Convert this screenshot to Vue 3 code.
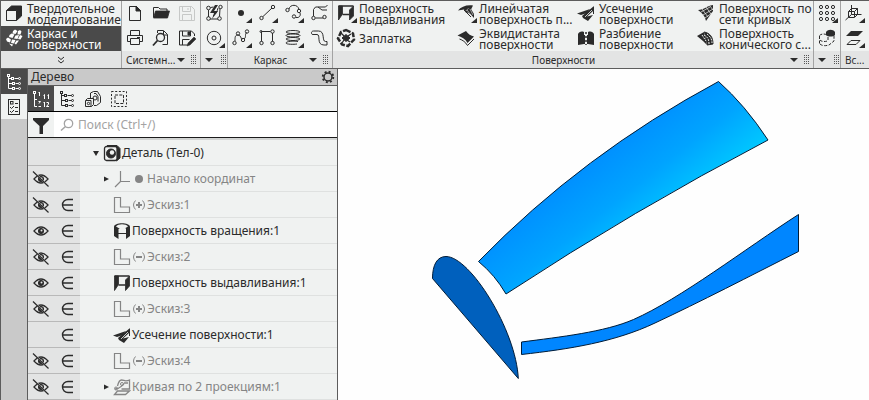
<script setup>
import { ref } from 'vue'

const corner = '<path d="M24 17v5h-6z" fill="currentColor" stroke="none"/>'

// Ribbon glyphs, drawn in a 26x25 cell
const glyphs = {
  solid: '<path d="M5.500 9.500l5-4.500h10v10l-5 4.500h-10z" fill="currentColor"/><path d="M5.500 9.500h10v10h-10z" fill="#f0f2f1"/>',
  frame: '<g fill="currentColor" stroke="none"><path d="M12 5l2-1.500 2.500 1.500-2 3-3-.5zM17 5l2-1 1.500 1.500-1 3-3 0zM8.500 9l2-1.500 3 1-2 3.500-3.500-1zM14.500 9.500l3.500-.5-1.500 4-3.500-.5zM19 9l2.500 1-2 3.500-2.500-.5zM5 13l2-1.500 3 2-1 3-3-1zM11 13.500l3.500 .5-1.500 3.500-3-.5zM15.500 14.500l2.500 0-3 4-1.500-1zM8 17.500l4 1-1 2z"/></g>',
  file: '<path d="M7.500 5.500h7l4 4v10h-11z"/><path d="M14 5v5h5z" fill="currentColor"/>',
  open: '<path d="M5.500 16V6.500h5l1.500 1.500h7v2"/><path d="M5.500 17l2-7h14l-2 7z" fill="currentColor" stroke-width=".8"/>',
  save: '<path d="M5.500 5.500h12l3 3v11h-15z"/><path d="M8.500 5.500v5h8v-5M8.500 19v-5.500h9V19M14 7v2" />',
  print: '<path d="M8.500 9V4.500h9V9M8.500 15.500h-3v-6h15v6h-3M8.500 12.500h9v6h-9zM15 11.500h3"/>',
  preview: '<path d="M9.500 7V4.500h6l4 4v10h-5"/><path d="M15.500 5v4h4"/><circle cx="12.500" cy="11.500" r="4" stroke-width="1.300"/><path d="M9.500 14.500l-4.500 5" stroke-width="1.800"/>',
  saveas: '<path d="M20.500 10V8l-3-3h-12v14h8"/><path d="M8.500 5v5h8V5M8.500 19v-5.500h7"/><path d="M20 11l2 2-6 6-3 1 1-3z" fill="currentColor" stroke-width=".5"/><path d="M14 6h2v3h-2z" fill="currentColor"/>',
  autosketch: '<path d="M7.500 16V9M9 18h8M18.500 15.500l.5-8M9.500 6.500l3-.5M12 15c3-2 4-4 5-8"/><circle cx="7.500" cy="7" r="1.800"/><circle cx="7.500" cy="17.500" r="1.800"/><circle cx="18.500" cy="17.500" r="1.800"/><circle cx="19.500" cy="6" r="1.700"/><path d="M14 4l-5 8h4l-2 6 6-8h-4l4-6z" fill="currentColor" stroke="none"/>',
  circle: '<circle cx="13" cy="12" r="6.700"/><circle cx="13" cy="12" r="2"/>' + corner,
  point: '<circle cx="13" cy="12" r="3" fill="currentColor" stroke="none"/>' + corner,
  line: '<path d="M9 15.500L18 7"/><circle cx="7.500" cy="17" r="1.700"/><circle cx="19" cy="6" r="1.700"/>' + corner,
  arc: '<path d="M9 8c1-5 9-5 10 .5M20 12c1 3-1 5-4 4.500"/><circle cx="7.500" cy="9" r="1.700"/><circle cx="19" cy="10" r="1.700"/><circle cx="14" cy="15.500" r="1.700"/>' + corner,
  contour: '<path d="M7.500 15V8.500l2-2.500h10l2-2M9.500 17H17M12 6l4 3h5"/><circle cx="7.500" cy="17" r="1.700"/><circle cx="18.500" cy="16" r="1.700"/>',
  spline: '<path d="M7 15c0-4 0-6 3-6s3 4 4 4.500M16 13c3-2 0-5 3-6.500"/><circle cx="6.500" cy="17" r="1.700"/><circle cx="10" cy="7.500" r="1.700"/><circle cx="15" cy="14" r="1.700"/><circle cx="19" cy="5.500" r="1.700"/>' + corner,
  poly: '<path d="M7.500 15.500V5.500h9M18.500 7v8.500"/><circle cx="7.500" cy="17" r="1.700"/><circle cx="18.500" cy="17" r="1.700"/><circle cx="18.500" cy="5.500" r="1.700"/><circle cx="7" cy="5.500" r="1"/>',
  helix: '<g><ellipse cx="13" cy="6" rx="7" ry="1.500"/><ellipse cx="13" cy="9.500" rx="7" ry="1.500"/><ellipse cx="13" cy="13" rx="7" ry="1.500"/><path d="M18 15.500c-5-1-12 0-12 1.500s8 1.500 11 1"/></g>' + corner,
  equid: '<path d="M5.500 7.500a2 2 0 0 1 2-2.500h5c7 0 3 10.500 7 10.500h1.500v3.500h-3c-8 0-3-10.500-7-10.500H7a1.500 1.500 0 0 1-1.500-1"/>',
  extrude: '<path d="M5.500 5h4v8l-4 6zM20.500 5v10l-4 4V9z" fill="currentColor" stroke-width=".8"/><path d="M5.500 5h15M9.500 13.500h7" stroke-width="1.300"/>' + corner,
  patch: '<path d="M13 4l7 3.500 1 6-6 6.500-6-1.500-4-6 3-6.500z" stroke-dasharray="5 1.500" stroke-width="2.500"/><path d="M13 8.500l4 3.500-4 3.500-4-3.500z" fill="currentColor"/><path d="M8 7l3 3M18 8l-3 2M9 17l2-3M17 16l-3-2" stroke-width="1.300"/>',
  ruled: '<path d="M5 9.500c3-4 9-6 15-5l-2 4-3-1-3 3-1-2z" fill="currentColor" stroke="none"/><path d="M12 11l3-3h3l3 5v4c-3-4-5-5-9-6z" fill="currentColor" stroke="none"/><path d="M14 9l4 5M17 8l3 6" stroke="#f0f2f1" stroke-width=".6"/><path d="M11 9l7 7"/>' + corner,
  offset: '<path d="M4.500 9.500L13 5c2 3 5 5 8 5.500l-6.500 6.500c-2-4-6-6-10-7.500z" fill="currentColor" stroke="none"/><path d="M6.500 13c3 1 6 3 8 6.500l6.500-6.500"/>',
  trim: '<path d="M4 12.500l13-4.500-3 4-6 2z" fill="currentColor" stroke="none"/><path d="M9 15L21 5l-1 5-6 5.500 6-1.500-5 6-5-3z" fill="currentColor" stroke="none"/><path d="M12 16l7-7" stroke="#f0f2f1" stroke-width=".8"/><path d="M20.500 6v7"/>',
  split: '<path d="M5 19V8c1-2 3-3 6-2v3h4V6c3-1 5 0 6 2v11l-6-1h-4z" fill="currentColor" stroke="none"/><path d="M13 4v16" stroke="#f0f2f1" stroke-width="2"/><path d="M13 6v2M13 10v2M13 14v2M13 18v1" stroke-width="1.500"/>',
  mesh: '<path d="M5 9c6 0 8-4 15-5l0 6-7 10c-1-5-4-8-8-11z" fill="currentColor" stroke="none"/><path d="M8 11l9-5M10 14l10-6M12 17l7-5M9 8l6 8M13 6l5 7M17 5l3 4" stroke="#f0f2f1" stroke-width=".7"/>',
  conic: '<path d="M4 10l7-4 3 13-4-4z" fill="currentColor" stroke="none"/><path d="M11 6c6 1 9 5 9 12l-6 1" fill="currentColor"/><path d="M11 9c4 2 5 5 5 9M14 8c4 3 5 6 5 9M9 9l4 6" stroke="#f0f2f1" stroke-dasharray="2 1"/>',
  array: '<g>' + [6, 12, 18].map(y => [7, 13, 19].map(x => `<circle cx="${x}" cy="${y}" r="1.600"/>`).join('')).join('') + '</g>' + corner,
  body: '<path d="M12 6c2-3 7-3 9 0v3c-2 2-7 2-9 0z" fill="currentColor" stroke="none"/><path d="M5.500 9.500c2-2 6-2 8 0M5.500 10v8M6 18c2 2 6 2 9 1l5-4V9M14 11v3c0 2-7 2-8 0" stroke-dasharray="3 1.500"/>',
  axes: '<path d="M10.500 4v9.500h10M10.500 13.500L4.500 19M7.500 10.500l3-3h6v6l-3 3h-6zM13.500 16v-5.500l3-3M7.500 10.500h6"/>' + corner,
  planes: '<path d="M10 5h12l-5 5H5z" fill="currentColor" stroke="none"/><path d="M10 14.500h9l-4 4H6z"/>' + corner,
}

// Tree and panel glyphs, drawn in an 18x18 cell
const small = {
  tree: '<rect x="2.500" y="1.500" width="2" height="2"/><path d="M3.500 4v11.500h4M3.500 10.500h4M3.500 5.500h3M9.500 5.500h4M10.500 10.500h3M10.500 15.500h3"/><rect x="6.500" y="4.500" width="2" height="2"/><rect x="7.500" y="9.500" width="2" height="2"/><rect x="7.500" y="14.500" width="2" height="2"/><circle cx="14.500" cy="5.500" r="1"/><circle cx="14.500" cy="10.500" r="1"/><circle cx="14.500" cy="15.500" r="1"/>',
  checks: '<rect x="3.500" y="1.500" width="11" height="15"/><rect x="5.500" y="3.500" width="2.500" height="2.500"/><path d="M10 5.500h3M10 9.500h3M10 13.500h3M5 9l1.500 1.500L9 8M5 13l1.500 1.500L9 12"/>',
  numtree: '<rect x="1.500" y="1.500" width="2" height="2"/><path d="M2.500 4v12.500H5M2.500 9.500H5M7.500 2v4M6.500 3l1-1M6.500 16.500h2.500M6.500 11.500h2l-1.500 2M11.500 5.500l1-1V9M15.500 5.500l1-1V9M11.500 13l1-1V17M14.500 12.500h2v1.500l-2 2.500H17"/>',
  parts: '<path d="M6.500 8V3l3-1.500h4l3 5v6l-4 3h-2.500M10 3.500h2l2 3v5M1.500 10.500l2-2h6v6l-2 2h-6zM2 10.500h5v6"/><circle cx="4.500" cy="13.500" r="1.200"/><circle cx="11" cy="8" r="2"/>',
  select: '<rect x="1.500" y="1.500" width="15" height="15" stroke-dasharray="2 1.700"/><rect x="5" y="5" width="8.500" height="8.500" stroke-dasharray="3 1.300"/>',
  filter: '<path d="M1 2h16v2l-6 6v8H7.500v-8L1 4z" fill="currentColor" stroke="none"/>',
  search: '<circle cx="10.500" cy="7.500" r="4.200" stroke-width="1.300"/><path d="M7.500 10.500L3 14.500" stroke-width="1.500"/>',
  gear: '<circle cx="9" cy="9" r="4" stroke-width="1.500"/><circle cx="9" cy="9" r="5.300" stroke-width="1.800" stroke-dasharray="2 2.160"/>',
  eye: '<path d="M2 9q7-8 14 0q-7 8-14 0z" stroke-width="1.300"/><circle cx="9" cy="9" r="2.600" fill="currentColor"/><circle cx="9.500" cy="8.500" r="1" fill="#e3e4e4" stroke="none"/>',
  hidden: '<path d="M2 9q7-8 14 0q-7 8-14 0z" stroke-width="1.300"/><circle cx="9" cy="9" r="2.600" fill="currentColor"/><circle cx="9.500" cy="8.500" r="1" fill="#e3e4e4" stroke="none"/><path d="M2 2l15 15" stroke="#e3e4e4" stroke-width="1.500"/><path d="M1 1.500l15.500 15" stroke-width="1.200"/>',
  element: '<path d="M15 3.500H10a5.500 5.500 0 0 0 0 11h5M4.500 9H15" stroke-width="1.400"/>',
  part: '<path d="M4 1.500h10l3 3v9.500l-3.500 3" fill="currentColor"/><rect x="1.500" y="2.500" width="12.500" height="14" rx="2" fill="#f0f2f1" stroke-width="1.300"/><circle cx="8" cy="9.500" r="4.500" fill="currentColor"/><circle cx="9" cy="8.500" r="2.200" fill="#f0f2f1" stroke="none"/>',
  origin: '<path d="M7.500 1v10.500h9.500M7.500 11.500L2 17" stroke-width="1.200"/>',
  sketch: '<path d="M1.500 1.500h6v9.500h9v5.500h-15z" stroke-width="1.200"/>',
  revolve: '<path d="M1 5c0-5 16-5 16 0v9l-4 3V6.500l-3-1.500H8L5.500 7v10L1 14z" fill="currentColor" stroke="none"/><path d="M3 4.500c2-3 10-3 12 0l-2.500 1.500h-7z" fill="#f0f2f1" stroke="none"/><path d="M5 11.500h8"/>',
  extrude: '<path d="M1.500 2h4v8.500l-4 6zM16.500 2v10l-4 4.500V6z" fill="currentColor" stroke-width=".8"/><path d="M1.500 2h15M5.500 11h7" stroke-width="1.300"/>',
  trim: '<path d="M0 9.500l13-4.500-3 4-6 2z" fill="currentColor" stroke="none"/><path d="M5 12L17 2l-1 5-6 5.500 6-1.500-5 6-5-3z" fill="currentColor" stroke="none"/><path d="M8 13l7-7" stroke="#f0f2f1" stroke-width=".8"/><path d="M16.500 3v7"/>',
  curve: '<path d="M4.500 8c1-4 2-6 4-6 3 0 3 2 8 0v9h-8M1.500 16.500h11l4-3.500h-12zM2 11c5 0 5-2 9-5M11 5h4" stroke-width="1.300"/><circle cx="9" cy="6" r="1.500"/><circle cx="3" cy="10.500" r="1.500"/>',
}

const modes = [
  { icon: 'solid', label: 'Твердотельное моделирование', active: false },
  { icon: 'frame', label: 'Каркас и поверхности', active: true },
]

const groups = [
  { name: 'Системн...', cls: 'system', tools: ['file', 'open', 'save', 'print', 'preview', 'saveas'] },
  { name: '', cls: 'narrow', tools: ['autosketch', 'circle'] },
  { name: 'Каркас', cls: 'wire', tools: ['point', 'line', 'arc', 'contour', 'spline', 'poly', 'helix', 'equid'] },
]

const surfaces = [
  ['extrude', 'Поверхность', 'выдавливания'],
  ['ruled', 'Линейчатая', 'поверхность п...'],
  ['trim', 'Усечение', 'поверхности'],
  ['mesh', 'Поверхность по', 'сети кривых'],
  ['patch', 'Заплатка'],
  ['offset', 'Эквидистанта', 'поверхности'],
  ['split', 'Разбиение', 'поверхности'],
  ['conic', 'Поверхность', 'конического с...'],
]

const panelTools = ['numtree', 'tree', 'parts', 'select']
const query = ref('')

const nodes = [
  { label: 'Деталь (Тел-0)', icon: 'part', root: true, toggle: '▼' },
  { label: 'Начало координат', icon: 'origin', eye: 'hidden', toggle: '▶', mark: '●', dim: true },
  { label: 'Эскиз:1', icon: 'sketch', eye: 'hidden', el: true, mark: '(+)', dim: true },
  { label: 'Поверхность вращения:1', icon: 'revolve', eye: 'eye', el: true },
  { label: 'Эскиз:2', icon: 'sketch', eye: 'hidden', el: true, mark: '(−)', dim: true },
  { label: 'Поверхность выдавливания:1', icon: 'extrude', eye: 'eye', el: true },
  { label: 'Эскиз:3', icon: 'sketch', eye: 'hidden', el: true, mark: '(+)', dim: true },
  { label: 'Усечение поверхности:1', icon: 'trim', el: true },
  { label: 'Эскиз:4', icon: 'sketch', eye: 'hidden', el: true, mark: '(−)', dim: true },
  { label: 'Кривая по 2 проекциям:1', icon: 'curve', eye: 'hidden', el: true, toggle: '▶', dim: true },
]
</script>

<template>
  <div class="app">
    <header class="ribbon">
      <section class="group modes">
        <button v-for="m in modes" :key="m.icon" class="wide" :class="{ active: m.active }">
          <svg class="glyph" viewBox="0 0 26 25" v-html="glyphs[m.icon]" />
          <span class="caption">{{ m.label }}</span>
        </button>
        <button class="foot more" aria-label="Ещё">
          <svg class="chevrons" viewBox="0 0 8 8"><path d="M1 1l3 2.500L7 1M1 4.500L4 7l3-2.500" /></svg>
        </button>
      </section>

      <section v-for="g in groups" :key="g.cls" class="group" :class="g.cls">
        <div class="tools">
          <button v-for="t in g.tools" :key="t" class="tool" :disabled="t === 'save'" :aria-label="t">
            <svg class="glyph" viewBox="0 0 26 25" v-html="glyphs[t]" />
          </button>
        </div>
        <div class="foot">
          <span class="name">{{ g.name }}</span><i class="arrow" /><i class="grip" />
        </div>
      </section>

      <section class="group surf">
        <div class="surfaces">
          <button v-for="s in surfaces" :key="s[0]" class="wide">
            <svg class="glyph" viewBox="0 0 26 25" v-html="glyphs[s[0]]" />
            <span class="caption">{{ s[1] }}<template v-if="s[2]"><br>{{ s[2] }}</template></span>
          </button>
        </div>
        <div class="foot"><span class="name">Поверхности</span><i class="arrow" /><i class="grip" /></div>
      </section>

      <section class="group narrow">
        <div class="tools">
          <button v-for="t in ['array', 'body']" :key="t" class="tool" :aria-label="t">
            <svg class="glyph" viewBox="0 0 26 25" v-html="glyphs[t]" />
          </button>
        </div>
        <div class="foot"><span class="name" /><i class="arrow" /><i class="grip" /></div>
      </section>

      <section class="group last">
        <div class="tools">
          <button v-for="t in ['axes', 'planes']" :key="t" class="tool" :aria-label="t">
            <svg class="glyph" viewBox="0 0 26 25" v-html="glyphs[t]" />
          </button>
        </div>
        <div class="foot"><span class="name">Вс...</span></div>
      </section>
    </header>

    <main class="work">
      <nav class="rail">
        <button class="tab active" aria-label="Дерево"><svg class="sm" viewBox="0 0 18 18" v-html="small.tree" /></button>
        <button class="tab" aria-label="Параметры"><svg class="sm" viewBox="0 0 18 18" v-html="small.checks" /></button>
      </nav>

      <aside class="panel">
        <div class="title">
          <span>Дерево</span>
          <button class="gear" aria-label="Настройка"><svg class="sm" viewBox="0 0 18 18" v-html="small.gear" /></button>
        </div>
        <div class="bar">
          <button v-for="(t, i) in panelTools" :key="t" class="tab" :class="{ active: i === 0 }" :aria-label="t">
            <svg class="sm" viewBox="0 0 18 18" v-html="small[t]" />
          </button>
        </div>
        <div class="search">
          <button class="tab" aria-label="Фильтр"><svg class="sm" viewBox="0 0 18 18" v-html="small.filter" /></button>
          <label class="field">
            <svg class="sm" viewBox="0 0 18 18" v-html="small.search" />
            <input v-model="query" type="text" placeholder="Поиск (Ctrl+/)">
          </label>
        </div>
        <ul class="tree">
          <li v-for="n in nodes" :key="n.label" class="row">
            <div class="state">
              <span class="slot"><svg v-if="n.eye" class="sm" viewBox="0 0 18 18" v-html="small[n.eye]" /></span>
              <span class="slot"><svg v-if="n.el" class="sm" viewBox="0 0 18 18" v-html="small.element" /></span>
            </div>
            <div class="node" :class="{ root: n.root, dim: n.dim }">
              <svg class="toggle" viewBox="0 0 8 8">
                <path v-if="n.toggle === '▼'" d="M1 2h6L4 7z" /><path v-else-if="n.toggle" d="M2 1.500v5l5-2.500z" />
              </svg>
              <svg class="sm" viewBox="0 0 18 18" v-html="small[n.icon]" />
              <svg v-if="n.mark" class="mark" viewBox="0 0 14 14">
                <circle v-if="n.mark === '●'" cx="7" cy="7" r="4" class="full" />
                <template v-else>
                  <path d="M3.500 2.500q-4 4.500 0 9M10.500 2.500q4 4.500 0 9" />
                  <path class="sign" d="M4 7h6" /><path v-if="n.mark === '(+)'" class="sign" d="M7 4v6" />
                </template>
              </svg>
              <span class="label">{{ n.label }}</span>
            </div>
          </li>
        </ul>
      </aside>

      <section class="scene">
        <svg class="model" viewBox="338 69 531 331" preserveAspectRatio="xMinYMin meet">
          <defs>
            <linearGradient id="blade" gradientUnits="userSpaceOnUse" x1="584" y1="155" x2="647" y2="235">
              <stop offset="0" stop-color="#008cff" />
              <stop offset=".55" stop-color="#00a4ff" />
              <stop offset="1" stop-color="#00c8ff" />
            </linearGradient>
          </defs>
          <path fill="url(#blade)" d="M478.500 261.500Q582.500 154.500 718.500 81.500Q745 105 768 140Q634 210 506 294Q495 275 478.500 261.500Z" />
          <path fill="#0060bd" d="M432.500 278.500C432.500 265 437 256.500 446 256.500C470 256.500 516 330 518.300 378.500Z" />
          <path fill="#0086ff" d="M521.500 342C560 337 605 332 633.500 319.500C680 299 745 249 798.500 214.500V251.500C750 276 700 302 655 323C615 342 570 349 521.500 354.500Z" />
        </svg>
      </section>
    </main>
  </div>
</template>

<style>
body {
  margin: 0;
  background: #fefefe;
}
</style>

<style scoped>
.app {
  display: flex;
  flex-direction: column;
  min-height: 100vh;
  box-sizing: border-box;
  border-left: 1px solid #5c5c5c;
  color: #2b2b2b;
  font: 12px/12px "Noto Sans", "Open Sans", sans-serif;
}
button {
  display: flex;
  align-items: center;
  margin: 0;
  padding: 0;
  border: 0;
  background: none;
  color: inherit;
  font: inherit;
  text-align: left;
}
svg {
  display: block;
  flex: none;
  fill: none;
  stroke: currentColor;
}
.ribbon {
  display: flex;
  border-top: 1px solid #5c5c5c;
  border-bottom: 1px solid #5c5c5c;
  background: #f0f2f1;
}
.group {
  display: flex;
  flex: none;
  flex-direction: column;
  justify-content: space-between;
  border-right: 1px solid #a3a3a3;
}
.modes { width: 120px; }
.system { width: 78px; }
.narrow { width: 26px; }
.wire { width: 104px; }
.surf { flex: 1; }
.last { width: 28px; border-right: 0; }
.tools {
  display: grid;
  grid-template-columns: repeat(auto-fill, 26px);
}
.surfaces {
  display: grid;
  grid-template-columns: repeat(4, 1fr);
}
.glyph {
  width: 26px;
  height: 25px;
}
.wide { height: 25px; }
.caption {
  line-height: 11px;
  white-space: nowrap;
}
.modes .caption { white-space: normal; }
.active {
  background: #4a4a4a;
  color: #fff;
}
.tool:disabled { color: #c6c8c7; }
.foot {
  display: flex;
  align-items: center;
  height: 17px;
  padding: 0 4px;
  background: #e3e4e4;
  font-size: 10px;
}
.more { justify-content: center; }
.chevrons {
  width: 8px;
  height: 8px;
}
.name {
  flex: 1;
  white-space: nowrap;
}
.wire .name,
.surf .name { text-align: center; }
.narrow .name { display: none; }
.narrow .foot { padding-right: 0; }
.arrow {
  border: 4px solid transparent;
  border-top-color: currentColor;
  border-bottom: 0;
}
.grip {
  width: 5px;
  height: 9px;
  margin-left: 6px;
  background: repeating-linear-gradient(#555 0 1px, transparent 1px 2px);
  mask: repeating-linear-gradient(90deg, #000 0 1px, transparent 1px 2px);
}
.narrow .grip { margin-left: 8px; }
.work {
  display: flex;
  flex: 1;
}
.rail {
  width: 26px;
  background: #c9c9c9;
}
.tab {
  justify-content: center;
  width: 26px;
  height: 25px;
  background: #f0f2f1;
}
.tab.active {
  background: #4a4a4a;
}
.sm {
  width: 18px;
  height: 18px;
}
.panel {
  flex: none;
  width: 309px;
  border: solid #5c5c5c;
  border-width: 0 1px;
  background: #f0f2f1;
}
.title {
  display: flex;
  align-items: center;
  justify-content: space-between;
  height: 16px;
  padding-left: 3px;
  border-bottom: 1px solid #5c5c5c;
  background: #c9c9c9;
}
.bar {
  display: flex;
  border-bottom: 1px solid #000;
}
.search {
  display: flex;
  border-bottom: 1px solid #1c1c1c;
}
.field {
  display: flex;
  flex: 1;
  align-items: center;
  gap: 2px;
  padding-left: 4px;
  background: #fff;
  color: #a3a3a3;
}
input {
  flex: 1;
  min-width: 0;
  padding: 0;
  border: 0;
  outline: 0;
  background: none;
  color: #2b2b2b;
  font: inherit;
  line-height: 18px;
}
input::placeholder {
  color: #a3a3a3;
  opacity: 1;
}
.tree {
  margin: 0;
  padding: 0;
  border-top: 2px solid #d2d4d3;
  list-style: none;
}
.row {
  display: flex;
  height: 26px;
}
.state {
  display: flex;
  border-bottom: 1px solid #b9b9b9;
  background: #e3e4e4;
}
.slot {
  display: flex;
  align-items: center;
  justify-content: center;
  width: 26px;
}
.node {
  display: flex;
  flex: 1;
  align-items: center;
  padding-left: 22px;
  border-bottom: 1px solid #dfe1e0;
  white-space: nowrap;
}
.root { padding-left: 12px; }
.dim { color: #858585; }
.toggle {
  width: 8px;
  height: 8px;
  margin-right: 3px;
  fill: #2b2b2b;
  stroke: none;
}
.label { margin-left: 1px; }
.mark {
  width: 14px;
  height: 14px;
  margin-left: 1px;
}
.full {
  fill: currentColor;
  stroke: none;
}
.sign { stroke-width: 2; }
.scene {
  flex: 1;
  background: #fefefe;
}
.model { width: 100%; }
.model path {
  stroke: #001c38;
  stroke-width: 1;
}
</style>
